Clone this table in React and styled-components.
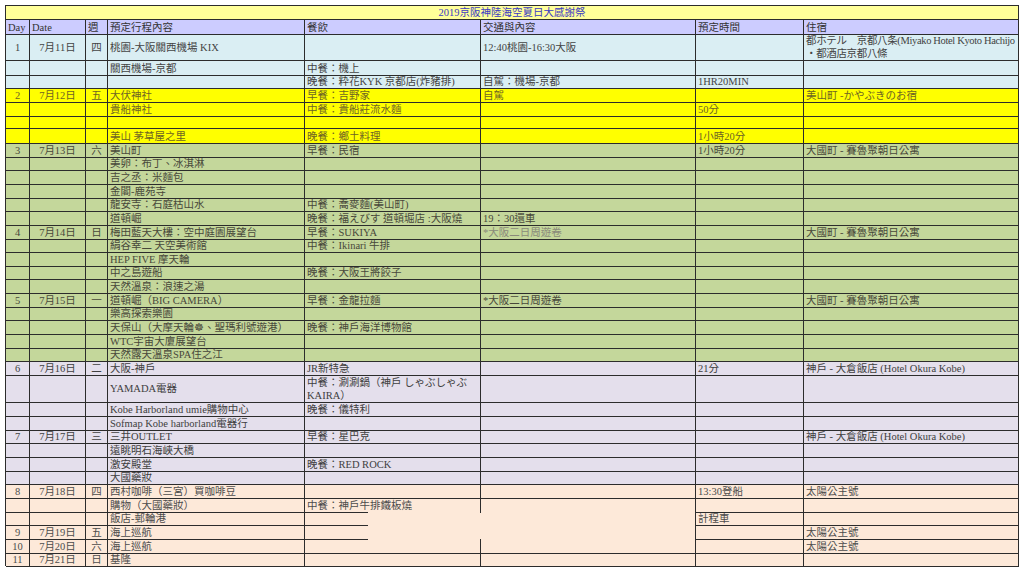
import React from "react";
import styled, { createGlobalStyle } from "styled-components";

const GlobalStyle = createGlobalStyle`
  body {
    margin: 0;
    background: #fff;
    font-family: "Liberation Serif", "Noto Sans CJK TC", serif;
  }
`;

const UNIT = 13.66;
const COLS = "24px 56px 22px 197px 176px 215px 108px 215px";
const LINE = "#2c2c2c";

const bands = {
  blue: { bg: "#daeef3", fg: "#434343" },
  yellow: { bg: "#ffff00", fg: "#6e6424" },
  green: { bg: "#c4d79b", fg: "#48483a" },
  lilac: { bg: "#e4dfec", fg: "#404040" },
  peach: { bg: "#fde9d9", fg: "#4c4c4c" },
};

const Page = styled.div`
  padding: 5px;
`;

const Sheet = styled.div`
  width: 1014px;
  border-top: 1px solid ${LINE};
  border-left: 1px solid ${LINE};
  box-sizing: border-box;
  font-size: 10.5px;
  line-height: 13px;
`;

const TitleRow = styled.div`
  height: ${UNIT}px;
  box-sizing: border-box;
  background: #ffff99;
  color: #3b3bc4;
  border-right: 1px solid ${LINE};
  border-bottom: 1px solid ${LINE};
  display: flex;
  align-items: center;
  justify-content: center;
`;

const Row = styled.div`
  display: grid;
  grid-template-columns: ${COLS};
  height: ${(p) => (p.$tall ? UNIT * 2 : UNIT)}px;
  background: ${(p) => p.$bg};
  color: ${(p) => p.$fg};
`;

const Cell = styled.div`
  box-sizing: border-box;
  padding: 1px 2px 0;
  display: flex;
  align-items: center;
  justify-content: ${(p) => (p.$center ? "center" : "flex-start")};
  white-space: pre;
  overflow: visible;
  letter-spacing: ${(p) => (p.$tight ? "-0.35px" : "normal")};
  color: ${(p) => (p.$muted ? "#8a8a7a" : "inherit")};
  border-right: ${(p) => (p.$noRight ? "none" : `1px solid ${LINE}`)};
  border-bottom: ${(p) =>
    p.$noBottom || p.$partial ? "none" : `1px solid ${LINE}`};
  background: ${(p) =>
    p.$partial
      ? `linear-gradient(${LINE}, ${LINE}) no-repeat left bottom / 63px 1px`
      : "none"};
  position: relative;
  z-index: ${(p) => (p.$over ? 1 : 0)};
`;

const HeadCell = styled(Cell)`
  background: #ccccff;
  color: #333;
`;

const Wrap = styled.span`
  white-space: pre;
  line-height: 13px;
`;

const heads = ["Day", "Date", "週", "預定行程內容", "餐飲", "交通與內容", "預定時間", "住宿"];

const rows = [
  { band: "blue", tall: true, day: "1", date: "7月11日", wk: "四", plan: "桃園-大阪關西機場 KIX", traffic: "12:40桃園-16:30大阪", stay: "都ホテル　京都八条(Miyako Hotel Kyoto Hachijo\n・都酒店京都八條", tight: true },
  { band: "blue", plan: "關西機場-京都", meal: "中餐：機上" },
  { band: "blue", meal: "晚餐：粋花KYK 京都店(炸豬排)", traffic: "自駕：機場-京都", time: "1HR20MIN" },
  { band: "yellow", day: "2", date: "7月12日", wk: "五", plan: "大伏神社", meal: "早餐：吉野家", traffic: "自駕", stay: "美山町 -かやぶきのお宿" },
  { band: "yellow", plan: "貴船神社", meal: "中餐：貴船莊流水麵", time: "50分" },
  { band: "yellow" },
  { band: "yellow", plan: "美山 茅草屋之里", meal: "晚餐：鄉土料理", time: "1小時20分" },
  { band: "green", day: "3", date: "7月13日", wk: "六", plan: "美山町", meal: "早餐：民宿", time: "1小時20分", stay: "大國町 - 賽魯聚朝日公寓" },
  { band: "green", plan: "美卵：布丁、冰淇淋" },
  { band: "green", plan: "吉之丞：米麵包" },
  { band: "green", plan: "金閣-鹿苑寺" },
  { band: "green", plan: "龍安寺：石庭枯山水", meal: "中餐：喬麥麵(美山町)" },
  { band: "green", plan: "道頓崛", meal: "晚餐：福えびす 道頓堀店 :大阪燒", traffic: "19：30還車" },
  { band: "green", day: "4", date: "7月14日", wk: "日", plan: "梅田藍天大樓：空中庭園展望台", meal: "早餐：SUKIYA", traffic: "*大阪二日周遊卷", muted: true, stay: "大國町 - 賽魯聚朝日公寓" },
  { band: "green", plan: "絹谷幸二 天空美術館", meal: "中餐：Ikinari 牛排" },
  { band: "green", plan: "HEP FIVE 摩天輪" },
  { band: "green", plan: "中之島遊船", meal: "晚餐：大阪王將餃子" },
  { band: "green", plan: "天然溫泉：浪速之湯" },
  { band: "green", day: "5", date: "7月15日", wk: "一", plan: "道頓崛（BIG CAMERA）", meal: "早餐：金龍拉麵", traffic: "*大阪二日周遊卷", stay: "大國町 - 賽魯聚朝日公寓" },
  { band: "green", plan: "樂高探索樂園" },
  { band: "green", plan: "天保山（大摩天輪☸、聖瑪利號遊港）", meal: "晚餐：神戶海洋博物館" },
  { band: "green", plan: "WTC宇宙大廈展望台" },
  { band: "green", plan: "天然露天溫泉SPA住之江" },
  { band: "lilac", day: "6", date: "7月16日", wk: "二", plan: "大阪-神戶", meal: "JR新特急", time: "21分", stay: "神戶 - 大倉飯店 (Hotel Okura Kobe)" },
  { band: "lilac", tall: true, plan: "YAMADA電器", meal: "中餐：涮涮鍋（神戶 しゃぶしゃぶ\nKAIRA）" },
  { band: "lilac", plan: "Kobe Harborland umie購物中心", meal: "晚餐：儀特利" },
  { band: "lilac", plan: "Sofmap Kobe harborland電器行" },
  { band: "lilac", day: "7", date: "7月17日", wk: "三", plan: "三井OUTLET", meal: "早餐：星巴克", stay: "神戶 - 大倉飯店 (Hotel Okura Kobe)" },
  { band: "lilac", plan: "遠眺明石海峽大橋" },
  { band: "lilac", plan: "激安殿堂", meal: "晚餐：RED ROCK" },
  { band: "lilac", plan: "大國藥妝" },
  { band: "peach", day: "8", date: "7月18日", wk: "四", plan: "西村咖啡（三宮）買咖啡豆", time: "13:30登船", stay: "太陽公主號" },
  { band: "peach", plan: "購物（大國藥妝）", meal: "中餐：神戶牛排鐵板燒", open: "first" },
  { band: "peach", plan: "飯店-郵輪港", time: "計程車", open: "mid" },
  { band: "peach", day: "9", date: "7月19日", wk: "五", plan: "海上巡航", stay: "太陽公主號", open: "mid" },
  { band: "peach", day: "10", date: "7月20日", wk: "六", plan: "海上巡航", stay: "太陽公主號" },
  { band: "peach", day: "11", date: "7月21日", wk: "日", plan: "基隆" },
];

function ItineraryRow({ r }) {
  const { bg, fg } = bands[r.band];
  const open = !!r.open;
  return (
    <Row $tall={r.tall} $bg={bg} $fg={fg}>
      <Cell $center>{r.day}</Cell>
      <Cell $center>{r.date}</Cell>
      <Cell $center>{r.wk}</Cell>
      <Cell>
        <Wrap>{r.plan}</Wrap>
      </Cell>
      <Cell $partial={open} $noRight={r.open === "mid"} $over>
        <Wrap>{r.meal}</Wrap>
      </Cell>
      <Cell $noBottom={open} $muted={r.muted}>
        {r.traffic}
      </Cell>
      <Cell>{r.time}</Cell>
      <Cell $tight={r.tight}>
        <Wrap>{r.stay}</Wrap>
      </Cell>
    </Row>
  );
}

export default function App() {
  return (
    <Page>
      <GlobalStyle />
      <Sheet>
        <TitleRow>2019京阪神陸海空夏日大感謝祭</TitleRow>
        <Row $bg="#ccccff" $fg="#333">
          {heads.map((h) => (
            <HeadCell key={h}>{h}</HeadCell>
          ))}
        </Row>
        {rows.map((r, idx) => (
          <ItineraryRow key={idx} r={r} />
        ))}
      </Sheet>
    </Page>
  );
}
